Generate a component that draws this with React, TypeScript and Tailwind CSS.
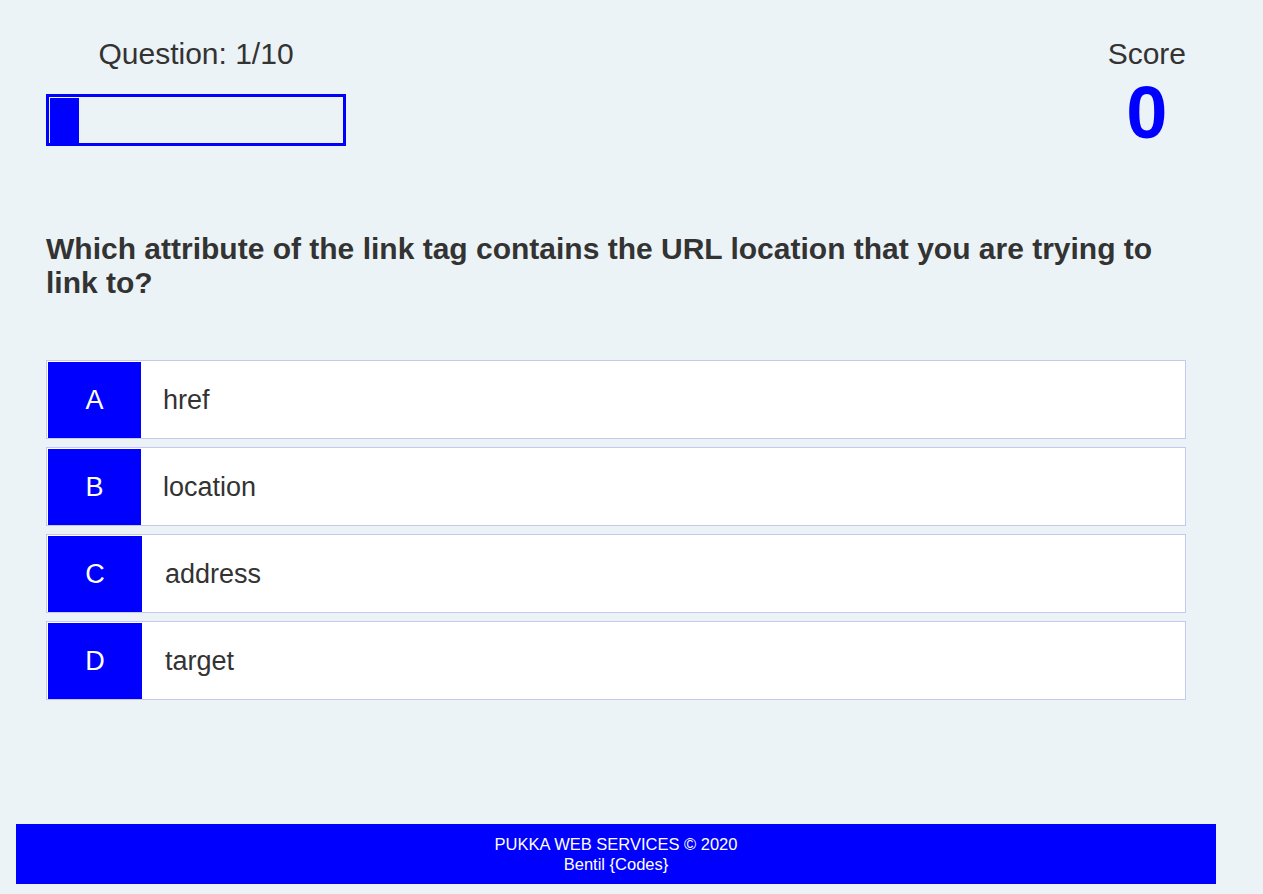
import { useState } from "react";

const options = [
  { letter: "A", text: "href" },
  { letter: "B", text: "location" },
  { letter: "C", text: "address" },
  { letter: "D", text: "target" },
];

export default function App() {
  const [current] = useState(1);
  const [score] = useState(0);
  const total = 10;

  return (
    <div
      className="min-h-screen bg-[#ecf3f6] text-[#333333] overflow-hidden"
      style={{ fontFamily: '"Liberation Sans", Arial, sans-serif' }}
    >
      <main className="ml-[46px] w-[1140px] pt-[36px]">
        {/* HUD */}
        <div className="flex justify-between items-start">
          <div className="w-[300px] flex flex-col items-center">
            <p className="text-[30px] leading-[35px]">
              Question: {current}/{total}
            </p>
            <div className="mt-[23px] w-[300px] h-[52px] border-[3px] border-[#0000ff] pt-[1px] pl-[1px]">
              <div className="h-full bg-[#0000ff]" style={{ width: `${(current / total) * 100 - 0.2}%` }} />
            </div>
          </div>
          <div className="flex flex-col items-center">
            <p className="text-[30px] leading-[35px]">Score</p>
            <p className="mt-[5px] text-[74px] leading-none font-bold text-[#0000ff]">{score}</p>
          </div>
        </div>

        {/* Question */}
        <h2 className="mt-[82px] text-[30px] leading-[34px] font-bold text-[#333333]">
          Which attribute of the link tag contains the URL location that you are trying to link to?
        </h2>

        {/* Choices */}
        <div className="mt-[60px] flex flex-col gap-[8px]">
          {options.map((o, i) => (
            <div
              key={o.letter}
              className="h-[79px] flex bg-white border border-[#c6c9ec] p-[1px] pb-0 cursor-pointer"
            >
              <div
                className={`${i > 1 ? "w-[94px]" : "w-[93px]"} bg-[#0000ff] text-white text-[27px] flex items-center justify-center`}
              >
                {o.letter}
              </div>
              <div className={`${i > 1 ? "ml-[23px]" : "ml-[22px]"} flex items-center text-[27px]`}>{o.text}</div>
            </div>
          ))}
        </div>
      </main>

      <footer className="mt-[124px] ml-[16px] w-[1200px] h-[60px] bg-[#0000ff] text-white text-[16.5px] leading-[20px] flex flex-col items-center justify-center">
        <p>PUKKA WEB SERVICES © 2020</p>
        <p>Bentil {"{Codes}"}</p>
      </footer>
    </div>
  );
}
